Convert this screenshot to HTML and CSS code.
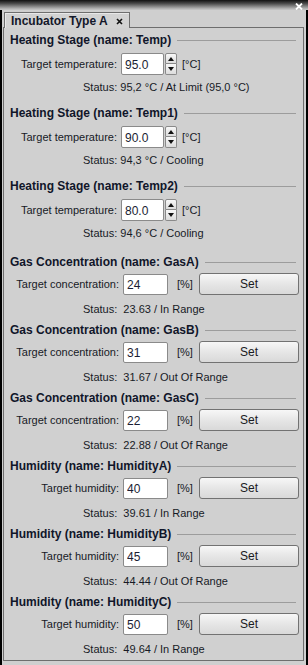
FILE: index.html
```html
<!DOCTYPE html>
<html lang="en">
<head>
  <meta charset="UTF-8">
  <meta name="viewport" content="width=device-width, initial-scale=1.0">
  <title>Incubator Type A</title>
  <link rel="stylesheet" href="styles.css">
</head>
<body>
  <div class="titlebar">
    <svg class="close" width="8" height="7" viewBox="0 0 8 7"><path d="M1 0.5 L7 6.5 M7 0.5 L1 6.5" stroke="#fff" stroke-width="1.8"/></svg>
  </div>

  <div class="frame">
    <div class="tabs">
      <div class="tab">Incubator Type A
        <svg class="tab-x" width="7" height="7" viewBox="0 0 7 7"><path d="M1 1 L6 6 M6 1 L1 6" stroke="#111" stroke-width="1.6"/></svg>
      </div>
    </div>

    <div class="panel">
      <!-- heating stages -->
      <div class="group heat">
        <div class="group-title">Heating Stage (name: Temp)</div>
        <div class="row">
          <span class="label">Target temperature:</span>
          <div class="spin">
            <input class="field" value="95.0">
            <div class="spin-btns"><span class="up"></span><span class="down"></span></div>
          </div>
          <span class="unit">[°C]</span>
        </div>
        <div class="status">Status: 95,2 °C / At Limit (95,0 °C)</div>
      </div>

      <div class="group heat">
        <div class="group-title">Heating Stage (name: Temp1)</div>
        <div class="row">
          <span class="label">Target temperature:</span>
          <div class="spin">
            <input class="field" value="90.0">
            <div class="spin-btns"><span class="up"></span><span class="down"></span></div>
          </div>
          <span class="unit">[°C]</span>
        </div>
        <div class="status">Status: 94,3 °C / Cooling</div>
      </div>

      <div class="group heat last-heat">
        <div class="group-title">Heating Stage (name: Temp2)</div>
        <div class="row">
          <span class="label">Target temperature:</span>
          <div class="spin">
            <input class="field" value="80.0">
            <div class="spin-btns"><span class="up"></span><span class="down"></span></div>
          </div>
          <span class="unit">[°C]</span>
        </div>
        <div class="status">Status: 94,6 °C / Cooling</div>
      </div>

      <!-- gas -->
      <div class="group setter">
        <div class="group-title">Gas Concentration (name: GasA)</div>
        <div class="row">
          <span class="label">Target concentration:</span>
          <input class="field" value="24">
          <span class="unit">[%]</span>
          <button class="set">Set</button>
        </div>
        <div class="status">Status:&nbsp; 23.63 / In Range</div>
      </div>

      <div class="group setter">
        <div class="group-title">Gas Concentration (name: GasB)</div>
        <div class="row">
          <span class="label">Target concentration:</span>
          <input class="field" value="31">
          <span class="unit">[%]</span>
          <button class="set">Set</button>
        </div>
        <div class="status">Status:&nbsp; 31.67 / Out Of Range</div>
      </div>

      <div class="group setter">
        <div class="group-title">Gas Concentration (name: GasC)</div>
        <div class="row">
          <span class="label">Target concentration:</span>
          <input class="field" value="22">
          <span class="unit">[%]</span>
          <button class="set">Set</button>
        </div>
        <div class="status">Status:&nbsp; 22.88 / Out Of Range</div>
      </div>

      <!-- humidity -->
      <div class="group setter">
        <div class="group-title">Humidity (name: HumidityA)</div>
        <div class="row">
          <span class="label">Target humidity:</span>
          <input class="field" value="40">
          <span class="unit">[%]</span>
          <button class="set">Set</button>
        </div>
        <div class="status">Status:&nbsp; 39.61 / In Range</div>
      </div>

      <div class="group setter">
        <div class="group-title">Humidity (name: HumidityB)</div>
        <div class="row">
          <span class="label">Target humidity:</span>
          <input class="field" value="45">
          <span class="unit">[%]</span>
          <button class="set">Set</button>
        </div>
        <div class="status">Status:&nbsp; 44.44 / Out Of Range</div>
      </div>

      <div class="group setter">
        <div class="group-title">Humidity (name: HumidityC)</div>
        <div class="row">
          <span class="label">Target humidity:</span>
          <input class="field" value="50">
          <span class="unit">[%]</span>
          <button class="set">Set</button>
        </div>
        <div class="status">Status:&nbsp; 49.64 / In Range</div>
      </div>
    </div>
  </div>
</body>
</html>
```

FILE: styles.css
```css
html, body {
  margin: 0;
  padding: 0;
}
body {
  width: 308px;
  height: 665px;
  overflow: hidden;
  background: #cfcfcf;
  font-family: "Liberation Sans", Arial, sans-serif;
  font-size: 11px;
  color: #171a26;
}
.titlebar {
  height: 10px;
  background: linear-gradient(#111, #4a4a4a 35%, #b0b0b0 85%, #c8c8c8);
  display: flex;
  justify-content: flex-end;
  align-items: flex-start;
}
.close {
  margin: 3px 5px 0 0;
}
.frame {
  height: 653px;
  border-left: 2px solid #000;
  border-right: 2px solid #000;
  border-bottom: 2px solid #000;
  padding: 2px 2px 0 1px;
  background: #cfcfcf;
}
.tabs {
  display: flex;
  padding-left: 1px;
  height: 15px;
}
.tab {
  position: relative;
  z-index: 1;
  display: flex;
  align-items: center;
  gap: 8px;
  height: 15px;
  padding: 0 6px 0 6px;
  width: 112px;
  background: #d2d2d2;
  border: 1px solid #6e6e6e;
  border-bottom: none;
  box-shadow: inset 1px 1px 0 #e8e8e8;
  font-weight: bold;
  font-size: 12px;
  color: #14182a;
}
.tab-x {
  margin-top: 1px;
}
.panel {
  height: 627px;
  border: 1px solid #6e6e6e;
  padding: 5px 7px 0 6px;
  background: #d0d0d0;
}
.group-title {
  display: flex;
  align-items: center;
  height: 14px;
  line-height: 14px;
  font-weight: bold;
  font-size: 12px;
  color: #10162a;
  white-space: nowrap;
}
.group-title::after {
  content: "";
  flex: 1;
  margin-left: 6px;
  border-top: 1px solid #9c9c9c;
}
.row {
  display: flex;
  align-items: center;
  height: 22px;
}
.row > * {
  flex-shrink: 0;
}
.label {
  text-align: right;
  white-space: nowrap;
}
.field {
  box-sizing: border-box;
  height: 22px;
  margin: 0;
  padding: 2px 3px 0;
  border: 1px solid #8a8a8a;
  border-radius: 2px;
  background: #fff;
  font-family: "Liberation Sans", Arial, sans-serif;
  font-size: 12px;
  color: #1a1d33;
  outline: none;
}
.unit {
  white-space: nowrap;
}
.status {
  height: 14px;
  line-height: 14px;
  margin-left: 73px;
  white-space: nowrap;
}

/* heating stage rows */
.heat .group-title {
  margin-bottom: 6px;
}
.heat .label {
  width: 107px;
  margin-right: 4px;
}
.heat .status {
  margin-top: 5px;
}
.heat {
  margin-bottom: 12px;
}
.heat.last-heat {
  margin-bottom: 15px;
}
.spin {
  display: flex;
  align-items: center;
  gap: 1px;
}
.spin .field {
  width: 43px;
  height: 22px;
}
.spin-btns {
  display: flex;
  flex-direction: column;
  height: 22px;
}
.spin-btns span {
  box-sizing: border-box;
  width: 12px;
  height: 11px;
  border: 1px solid #8a8a8a;
  background: linear-gradient(#f8f8f8, #dcdcdc);
  display: flex;
  align-items: center;
  justify-content: center;
}
.spin-btns .up {
  border-radius: 2px 2px 0 0;
}
.spin-btns .down {
  border-top: none;
  border-radius: 0 0 2px 2px;
}
.spin-btns .up::before {
  content: "";
  border-left: 3px solid transparent;
  border-right: 3px solid transparent;
  border-bottom: 4px solid #111;
}
.spin-btns .down::before {
  content: "";
  border-left: 3px solid transparent;
  border-right: 3px solid transparent;
  border-top: 4px solid #111;
}
.heat .unit {
  margin-left: 5px;
}

/* gas / humidity rows with set button */
.setter {
  margin-bottom: 7px;
}
.setter .group-title {
  margin-bottom: 4px;
}
.setter .label {
  width: 109px;
  margin-right: 4px;
}
.setter .field {
  width: 45px;
  height: 21px;
}
.setter .unit {
  margin-left: 9px;
  width: 19px;
}
.setter .status {
  margin-top: 7px;
}
.set {
  box-sizing: border-box;
  width: 100px;
  height: 22px;
  margin-left: 3px;
  border: 1px solid #727272;
  border-radius: 3px;
  background: linear-gradient(#f7f7f7, #e6e6e6 50%, #d9d9d9);
  font-family: "Liberation Sans", Arial, sans-serif;
  font-size: 12px;
  color: #1a1a22;
  padding: 0;
}
```
